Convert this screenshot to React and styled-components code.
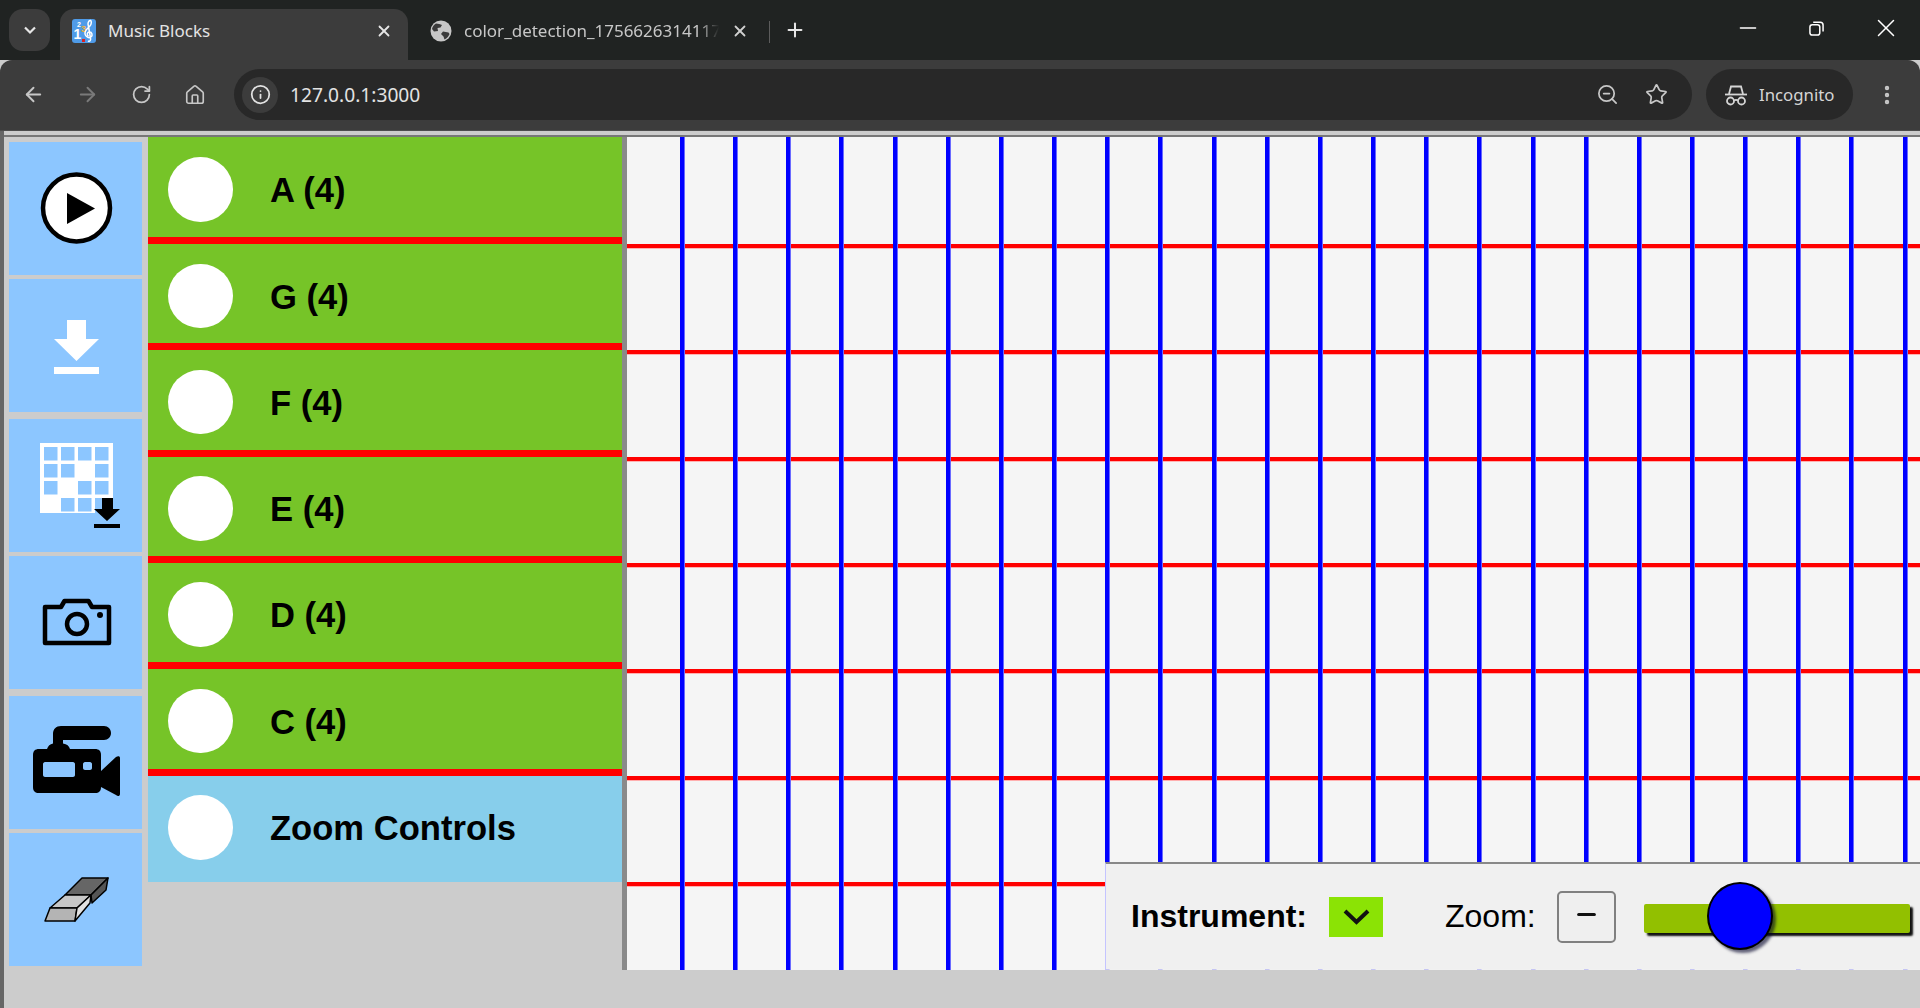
import React from "react";
import styled, { createGlobalStyle } from "styled-components";
import { ArrowLeft, ArrowRight, RotateCw, House, Info, ZoomOut, Star, X, Plus, Minus, EllipsisVertical } from "lucide-react";

const Global = createGlobalStyle`
  html, body { margin: 0; padding: 0; height: 100%; overflow: hidden; background: #ccc; }
  * { box-sizing: border-box; }
`;

const Shell = styled.div`
  width: 1920px; height: 1008px; display: flex; flex-direction: column; overflow: hidden;
  font-family: "Liberation Sans", Arial, sans-serif;
`;

/* ---------- browser chrome ---------- */
const TabStrip = styled.div`
  height: 60px; flex: none; background: #202322; display: flex; align-items: flex-start;
  padding: 9px 0 0 9px; color: #e6e6e6; font-family: "Noto Sans", sans-serif;
`;
const TabSearch = styled.div`
  width: 41px; height: 42px; border-radius: 14px; background: #3c3c3c;
  display: flex; align-items: center; justify-content: center; margin-right: 10px; flex: none;
`;
const ActiveTab = styled.div`
  width: 348px; height: 51px; flex: none; background: #3c3c3c; border-radius: 14px 14px 0 0;
  display: flex; align-items: center; padding: 0 15px 8px 12px; font-size: 17px; color: #e3e3e3;
`;
const Tab = styled.div`
  width: 361px; height: 51px; flex: none; display: flex; align-items: center;
  padding: 0 20px 8px 22px; font-size: 17px; color: #c7c7c7;
`;
const TabTitle = styled.span`
  flex: 1; margin-left: 12px; white-space: nowrap; overflow: hidden;
  ${p => p.$fade && "mask-image: linear-gradient(90deg, #000 92%, transparent);"}
`;
const TabDivider = styled.div`
  width: 1px; height: 22px; background: #5c5c5c; margin-top: 12px; flex: none;
`;
const NewTab = styled.div`
  margin: 10px 0 0 14px; flex: none; display: flex;
`;
const WindowControls = styled.div`
  margin-left: auto; margin-top: -1px; display: flex; height: 40px;
`;
const WindowButton = styled.div`
  width: 69px; height: 40px; display: flex; align-items: center; justify-content: center;
`;

const Toolbar = styled.div`
  height: 71px; flex: none; background: #3c3c3c; border-radius: 12px 12px 0 0;
  display: flex; align-items: flex-start; padding: 9px 0 0 0; color: #c7c7c7;
  font-family: "Noto Sans", sans-serif; border-bottom: 1px solid #4d4d4d;
`;
const NavIcon = styled.div`
  width: 54px; height: 51px; flex: none; display: flex; align-items: center; justify-content: center;
  color: ${p => (p.$dim ? "#7a7a7a" : "#c7c7c7")};
`;
const NavGroup = styled.div`
  display: flex; padding-left: 6px; width: 234px; flex: none;
`;
const Omnibox = styled.div`
  width: 1458px; height: 51px; flex: none; border-radius: 26px; background: #282828;
  display: flex; align-items: center; padding: 0 24px 0 8px;
`;
const InfoChip = styled.div`
  width: 36px; height: 36px; border-radius: 50%; background: #3c3c3c; flex: none;
  display: flex; align-items: center; justify-content: center; color: #e3e3e3;
`;
const Url = styled.span`
  margin-left: 12px; font-size: 19.2px; color: #e3e3e3; flex: 1;
`;
const OmniActions = styled.div`
  display: flex; gap: 26px; align-items: center; color: #c7c7c7;
`;
const IncognitoPill = styled.div`
  margin-left: 14px; width: 147px; height: 51px; flex: none; border-radius: 26px; background: #282828;
  display: flex; align-items: center; gap: 12px; padding-left: 19px; font-size: 16.8px; color: #d5d5d5;
`;
const MenuDots = styled.div`
  margin-left: 22px; height: 51px; display: flex; align-items: center; color: #c7c7c7;
`;

/* ---------- page ---------- */
const Page = styled.div`
  flex: 1; min-height: 0; background: #ccc; border-left: 4px solid #666; display: flex; flex-direction: column;
`;
const TopRule = styled.div`
  height: 6px; flex: none; border-bottom: 2px solid #777;
`;
const Workspace = styled.div`
  display: flex; flex: none; height: 833px;
`;
const Sidebar = styled.div`
  width: 144px; flex: none; display: flex; flex-direction: column; padding: 5px 0 0 5px;
`;
const ToolButton = styled.div`
  width: 133px; height: 133px; flex: none; background: #8cc6ff; margin-top: ${p => p.$top || 0}px;
  display: flex;
`;
const ToolIcon = styled.svg`
  width: 133px; height: 133px; display: block;
`;
const Matrix = styled.div`
  width: 474px; flex: none; display: flex; flex-direction: column;
`;
const PitchRow = styled.div`
  height: 106.33px; flex: none; display: flex; align-items: flex-start; padding: 19.5px 0 0 20px;
  background: ${p => (p.$zoom ? "#87ceeb" : "#76c428")};
  border-bottom: ${p => (p.$zoom ? "none" : "7px solid #f00")};
  &:first-child { height: 107px; padding-top: 20px; }
`;
const Knob = styled.div`
  width: 64.5px; height: 64.5px; border-radius: 50%; background: #fff; flex: none;
`;
const PitchLabel = styled.div`
  margin-left: 37.5px; height: 64.5px; line-height: 67px; font-size: 34.6px; font-weight: 700; color: #000;
  white-space: nowrap;
`;
const GridPanel = styled.div`
  position: relative; flex: 1; min-width: 0; background: #f5f5f5; border-left: 5px solid #8a8a8a; overflow: hidden;
`;
const HLines = styled.div`
  display: flex; flex-direction: column; padding-top: 107px; height: 100%;
`;
const HLine = styled.div`
  height: 106.33px; flex: none;
  background: linear-gradient(180deg, #f00 0 4px, #ffb0b0 4px 5px, transparent 5px);
`;
const VLines = styled.div`
  position: absolute; inset: 0; display: flex; padding-left: 53px;
`;
const VLine = styled.div`
  width: 53.17px; flex: none;
  background: linear-gradient(90deg, #00f 0 4px, #6a6aff 4px 5px, transparent 5px);
`;
const Palette = styled.div`
  position: absolute; right: 0; bottom: 0; width: 815px; height: 108px; background: #f0f0f0;
  background-clip: padding-box; border-top: 2px solid #888; border-left: 1px solid #c4c4ff;
  border-bottom: 1px solid rgba(240, 240, 240, 0.82);
  display: flex; align-items: center; padding-left: 25px; color: #000; font-size: 32px;
`;
const InstrumentLabel = styled.span`
  font-weight: 700; white-space: nowrap;
`;
const InstrumentSelect = styled.div`
  width: 54px; height: 40px; background: #8be305; margin-left: 22px; flex: none;
  display: flex; align-items: center; justify-content: center;
`;
const ZoomLabel = styled.span`
  margin-left: 62px; white-space: nowrap;
`;
const ZoomButton = styled.div`
  width: 59px; height: 52px; margin-left: 21px; flex: none; border: 2px solid #808080; border-radius: 5px;
  background: #efefef; display: flex; align-items: center; justify-content: center; padding-bottom: 4px;
`;
const SliderTrack = styled.div`
  position: relative; width: 266px; height: 29px; margin: 3px 0 0 28px; flex: none; background: #92c000;
  border-radius: 2px; box-shadow: 3px 3px 2px #111;
`;
const SliderThumb = styled.div`
  position: absolute; left: 63px; top: -22px; width: 66px; height: 68px; border-radius: 50%;
  background: #00f; border: 2px solid #000; box-shadow: 3px 3px 3px rgba(0, 0, 40, 0.6);
`;

const Favicon = styled.svg`
  width: 24px; height: 24px; flex: none; display: block;
`;
const FaviconText = styled.text`
  font-family: "Liberation Sans", sans-serif; font-weight: 700;
`;

const Chevron = () => (
  <svg width="16" height="16" viewBox="0 0 16 16"><path d="M3 5.5 8 10.5 13 5.5" fill="none" stroke="#e6e6e6" strokeWidth="2.2" /></svg>
);

const Globe = () => (
  <svg width="22" height="22" viewBox="0 0 22 22" style={{ flex: "none" }}>
    <circle cx="11" cy="11" r="10.5" fill="#c7c7c7" />
    <path d="M6 3.5c2 .5 4.5.5 6 1.5l-1.5 2.5L7.5 8 8 11l-4 .5L2 9c.5-2.5 2-4.500 4-5.500z" fill="#3a3a3a" />
    <path d="M13 11.500l5.500 1 1 1.500c-1 2.500-2.500 4.500-5 5.500l-1-3-2.500-2.500z" fill="#3a3a3a" />
  </svg>
);

const MusicFavicon = () => (
  <Favicon viewBox="0 0 24 24">
    <rect width="24" height="24" rx="3" fill="#4f9be8" />
    <FaviconText x="1.500" y="20" fontSize="14" fill="#fff">1</FaviconText>
    <FaviconText x="5" y="8" fontSize="7" fill="#fff">2</FaviconText>
    <FaviconText x="9" y="13" fontSize="9" fill="#f4b33a">3</FaviconText>
    <path d="M16 22c2 1 3-1 2.500-3L16 5c0-2 1.500-4 2.500-3.500S20 5 17.500 7.500 12.500 12 13 15s4 4.500 6 3 1-5-1.500-5-3 3-1 4" fill="none" stroke="#fff" strokeWidth="1.500" />
    <rect x="10" y="20" width="3" height="3" fill="#d22" />
  </Favicon>
);

const Restore = () => (
  <svg width="15" height="15" viewBox="0 0 16 16" fill="none" stroke="#fff" strokeWidth="1.600">
    <rect x="1" y="4" width="10.500" height="11" rx="2.500" />
    <path d="M4.500 1.200h7.500a3 3 0 0 1 3 3v7" />
  </svg>
);

const Incognito = () => (
  <svg width="22" height="22" viewBox="0 0 22 22" fill="none" stroke="#d5d5d5" strokeWidth="1.800" style={{ flex: "none" }}>
    <path d="M0 10.500h22" />
    <path d="M4 10 6 2.500h10L18 10" />
    <circle cx="5.500" cy="17" r="3.500" />
    <circle cx="16.500" cy="17" r="3.500" />
    <path d="M9 16.500c1.300-.8 2.700-.8 4 0" />
  </svg>
);

const SelectArrow = () => (
  <svg width="27" height="17" viewBox="0 0 27 17"><path d="M2 3 13.500 14 25 3" fill="none" stroke="#111" strokeWidth="4" /></svg>
);

const PlayIcon = () => (
  <ToolIcon viewBox="0 0 133 133">
    <circle cx="67.500" cy="66" r="33.500" fill="#fff" stroke="#000" strokeWidth="4.500" />
    <path d="M58 51 86 66.500 58 82z" fill="#000" />
  </ToolIcon>
);
const SaveIcon = () => (
  <ToolIcon viewBox="0 0 133 133">
    <path d="M58 41h19v19h13L67.500 82 45 60h13z" fill="#fff" />
    <rect x="45" y="88" width="45" height="7" fill="#fff" />
  </ToolIcon>
);
const holes = [
  [0, 0], [1, 0], [2, 0], [3, 0],
  [0, 1], [1, 1], [3, 1],
  [0, 2], [2, 2], [3, 2],
  [1, 3], [2, 3],
];
const GridSaveIcon = () => (
  <ToolIcon viewBox="0 0 133 133">
    <path d="M31 24h73v55H86v15H31z" fill="#fff" />
    {holes.map(([c, r]) => (
      <rect key={`${c}-${r}`} x={35 + c * 17} y={28 + r * 17} width="13.500" height="13.500" fill="#8cc6ff" />
    ))}
    <path d="M93 79h11v11h7L98 102 85 90h8z" fill="#000" />
    <rect x="85" y="105" width="26" height="4" fill="#000" />
  </ToolIcon>
);
const CameraIcon = () => (
  <ToolIcon viewBox="0 0 133 133">
    <path d="M36 51H52l3.500-6h24l3.500 6h17v36H36z" fill="none" stroke="#000" strokeWidth="4.500" strokeLinejoin="round" />
    <circle cx="68" cy="68" r="10" fill="none" stroke="#000" strokeWidth="4.500" />
    <circle cx="91" cy="59" r="3" fill="#000" />
  </ToolIcon>
);
const VideoIcon = () => (
  <ToolIcon viewBox="0 0 133 133">
    <path fillRule="evenodd" d="M30 53h8c1-3 3-5 6-5.500V38c0-5 3-8 8-8h8c0 0 3 0 3 0h32c4 0 7 3 7 7s-3 7-7 7H54v3.500c4 .5 6 2.500 7 5.500h25c4 0 6 2 6 6v32c0 4-2 6-6 6H30c-4 0-6-2-6-6V59c0-4 2-6 6-6zM36 66c-1 0-2 1-2 2v11c0 1 1 2 2 2h28c1 0 2-1 2-2V68c0-1-1-2-2-2zM76 66c-1 0-2 1-2 2v4c0 1 1 2 2 2h5c1 0 2-1 2-2v-4c0-1-1-2-2-2z" fill="#000" />
    <path d="M92 75l15-14c2-1 4-1 4 1v36c0 2-2 3-4 1L92 91z" fill="#000" />
  </ToolIcon>
);
const EraserIcon = () => (
  <ToolIcon viewBox="0 0 133 133" stroke="#000" strokeWidth="1.500" strokeLinejoin="round">
    <path d="M73 45h26L82 62H56z" fill="#666" />
    <path d="M56 62h26L68 75H41z" fill="#c8c8c8" />
    <path d="M41 75h27l-2 13H36z" fill="#b4b4b4" />
    <path d="M99 45l-2 12-14 13-1-8z" fill="#555" />
    <path d="M82 62l-1 8-15 18 2-13z" fill="#e2e2e2" />
  </ToolIcon>
);

const notes = ["A (4)", "G (4)", "F (4)", "E (4)", "D (4)", "C (4)"];
const tools = [
  { Icon: PlayIcon, top: 0 },
  { Icon: SaveIcon, top: 4 },
  { Icon: GridSaveIcon, top: 7 },
  { Icon: CameraIcon, top: 4 },
  { Icon: VideoIcon, top: 7 },
  { Icon: EraserIcon, top: 4 },
];

export default function App() {
  return (
    <Shell>
      <Global />
      <TabStrip>
        <TabSearch><Chevron /></TabSearch>
        <ActiveTab>
          <MusicFavicon />
          <TabTitle>Music Blocks</TabTitle>
          <X size={18} strokeWidth={2.4} color="#e6e6e6" />
        </ActiveTab>
        <Tab>
          <Globe />
          <TabTitle $fade>color_detection_1756626314117</TabTitle>
          <X size={18} strokeWidth={2.4} color="#d0d0d0" style={{ marginLeft: 12 }} />
        </Tab>
        <TabDivider />
        <NewTab><Plus size={22} strokeWidth={2.2} color="#e6e6e6" /></NewTab>
        <WindowControls>
          <WindowButton><Minus size={26} strokeWidth={1.4} color="#fff" /></WindowButton>
          <WindowButton><Restore /></WindowButton>
          <WindowButton><X size={30} strokeWidth={1.2} color="#fff" /></WindowButton>
        </WindowControls>
      </TabStrip>
      <Toolbar>
        <NavGroup>
          <NavIcon><ArrowLeft size={23} strokeWidth={2} /></NavIcon>
          <NavIcon $dim><ArrowRight size={23} strokeWidth={2} /></NavIcon>
          <NavIcon><RotateCw size={21} strokeWidth={2} /></NavIcon>
          <NavIcon><House size={22} strokeWidth={1.8} /></NavIcon>
        </NavGroup>
        <Omnibox>
          <InfoChip><Info size={21} strokeWidth={2} /></InfoChip>
          <Url>127.0.0.1:3000</Url>
          <OmniActions>
            <ZoomOut size={23} strokeWidth={1.8} />
            <Star size={23} strokeWidth={1.8} />
          </OmniActions>
        </Omnibox>
        <IncognitoPill><Incognito />Incognito</IncognitoPill>
        <MenuDots><EllipsisVertical size={24} strokeWidth={2.4} /></MenuDots>
      </Toolbar>
      <Page>
        <TopRule />
        <Workspace>
          <Sidebar>
            {tools.map(({ Icon, top }, i) => (
              <ToolButton key={i} $top={top}><Icon /></ToolButton>
            ))}
          </Sidebar>
          <Matrix>
            {notes.map(n => (
              <PitchRow key={n}><Knob /><PitchLabel>{n}</PitchLabel></PitchRow>
            ))}
            <PitchRow $zoom><Knob /><PitchLabel>Zoom Controls</PitchLabel></PitchRow>
          </Matrix>
          <GridPanel>
            <HLines>
              {Array.from({ length: 7 }, (_, i) => <HLine key={i} />)}
            </HLines>
            <VLines>
              {Array.from({ length: 24 }, (_, i) => <VLine key={i} />)}
            </VLines>
            <Palette>
              <InstrumentLabel>Instrument:</InstrumentLabel>
              <InstrumentSelect><SelectArrow /></InstrumentSelect>
              <ZoomLabel>Zoom:</ZoomLabel>
              <ZoomButton><Minus size={27} strokeWidth={2.7} color="#111" /></ZoomButton>
              <SliderTrack><SliderThumb /></SliderTrack>
            </Palette>
          </GridPanel>
        </Workspace>
      </Page>
    </Shell>
  );
}
